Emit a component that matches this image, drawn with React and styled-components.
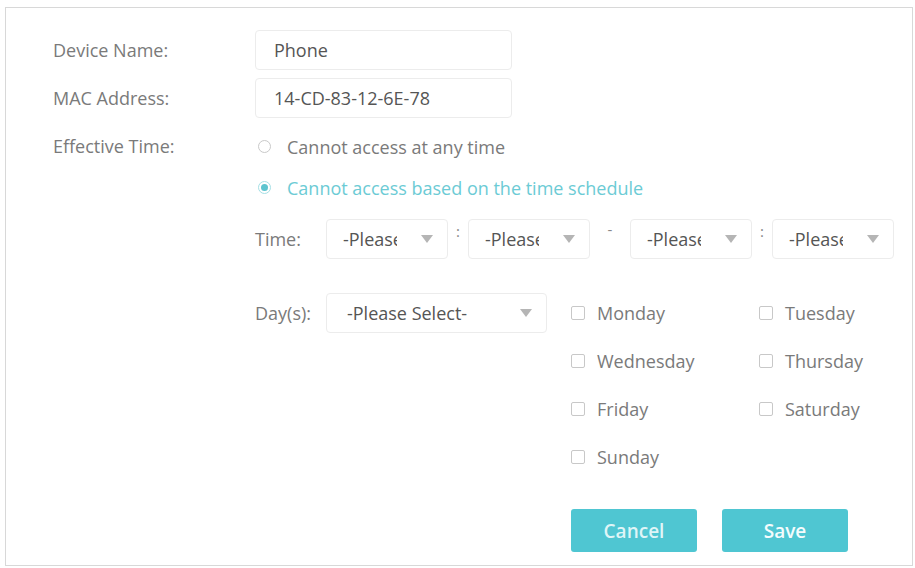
import React from "react";
import styled, { createGlobalStyle } from "styled-components";

const Global = createGlobalStyle`
  html, body { margin: 0; padding: 0; background: #fff; }
  body { font-family: "Open Sans", "Noto Sans", sans-serif; }
  * { box-sizing: border-box; }
`;

const Page = styled.div`
  padding: 7px 2px 2px 5px;
  width: 915px;
  height: 568px;
`;

const Panel = styled.div`
  width: 908px;
  height: 559px;
  border: 1px solid #d8d8d8;
  padding: 22px 0 0 47px;
  display: flex;
  flex-direction: column;
  color: #7a7a7a;
  font-size: 18px;
`;

const Row = styled.div`
  display: flex;
  align-items: ${(p) => (p.$top ? "flex-start" : "center")};
  margin-top: ${(p) => p.$mt || 0}px;
`;

const Label = styled.div`
  width: 202px;
  flex: none;
  line-height: ${(p) => p.$lh || 40}px;
`;

const TextInput = styled.div`
  width: 257px;
  height: 40px;
  border: 1px solid #ececec;
  border-radius: 4px;
  padding-left: 18px;
  display: flex;
  align-items: center;
  color: #555;
`;

const Col = styled.div`
  display: flex;
  flex-direction: column;
`;

const RadioRow = styled.label`
  display: flex;
  align-items: center;
  height: 41px;
  gap: 16px;
  padding-left: 3px;
  color: ${(p) => (p.$on ? "#6ccbd5" : "#7a7a7a")};
`;

const RadioDot = styled.span`
  width: 13px;
  height: 13px;
  border-radius: 50%;
  border: 1px solid ${(p) => (p.$on ? "#a5dfe5" : "#c9c9c9")};
  display: flex;
  align-items: center;
  justify-content: center;
  &::after {
    content: "";
    width: 7px;
    height: 7px;
    border-radius: 50%;
    background: ${(p) => (p.$on ? "#5cc4cf" : "transparent")};
  }
`;

const SubLabel = styled.div`
  width: 71px;
  flex: none;
  height: 40px;
  display: flex;
  align-items: center;
`;

const Select = styled.div`
  width: ${(p) => p.$w}px;
  height: 40px;
  border: 1px solid #ececec;
  border-radius: 4px;
  display: flex;
  align-items: center;
  padding: 0 14px 0 ${(p) => p.$pl || 16}px;
  color: #555;
  white-space: nowrap;
  flex: none;
`;

const SelText = styled.span`
  width: ${(p) => (p.$tw ? `${p.$tw}px` : "auto")};
  overflow: hidden;
  text-overflow: clip;
  white-space: nowrap;
  flex: none;
`;

const Arrow = styled.span`
  width: 0;
  height: 0;
  border-left: 6px solid transparent;
  border-right: 6px solid transparent;
  border-top: 8px solid #b5b5b5;
  margin-left: auto;
  flex: none;
`;

const Sep = styled.div`
  width: ${(p) => p.$w}px;
  height: 14px;
  align-self: flex-start;
  text-align: center;
  font-size: 15px;
  line-height: 14px;
  color: #888;
  margin-top: ${(p) => p.$mt || 0}px;
`;

const Days = styled.div`
  display: grid;
  grid-template-columns: 188px 150px;
  row-gap: 8px;
  margin-left: 24px;
`;

const Day = styled.label`
  height: 40px;
  display: flex;
  align-items: center;
  gap: 12px;
  color: #7a7a7a;
`;

const Box = styled.span`
  width: 14px;
  height: 14px;
  border: 1px solid #c8c8c8;
  border-radius: 2px;
  flex: none;
`;

const Buttons = styled.div`
  display: flex;
  gap: 25px;
  margin: 32px 0 0 518px;
`;

const Button = styled.button`
  width: 126px;
  height: 43px;
  border: none;
  border-radius: 3px;
  background: #4fc6d2;
  color: ${(p) => (p.$dim ? "#dff5f7" : "#f4fcfd")};
  font-family: "Open Sans", "Liberation Sans", sans-serif;
  font-size: 19px;
  font-weight: 600;
  cursor: pointer;
`;

const TimeSelect = () => (
  <Select $w={122}>
    <SelText $tw={54}>-Please Select-</SelText>
    <Arrow />
  </Select>
);

export default function App() {
  return (
    <>
      <Global />
      <Page>
        <Panel>
          <Row>
            <Label>Device Name:</Label>
            <TextInput>Phone</TextInput>
          </Row>
          <Row $mt={8}>
            <Label>MAC Address:</Label>
            <TextInput>14-CD-83-12-6E-78</TextInput>
          </Row>
          <Row $mt={8} $top>
            <Label $lh={41}>Effective Time:</Label>
            <Col>
              <RadioRow>
                <RadioDot />
                Cannot access at any time
              </RadioRow>
              <RadioRow $on>
                <RadioDot $on />
                Cannot access based on the time schedule
              </RadioRow>
              <Row $mt={11}>
                <SubLabel>Time:</SubLabel>
                <TimeSelect />
                <Sep $w={20} $mt={5}>:</Sep>
                <TimeSelect />
                <Sep $w={40} $mt={3}>-</Sep>
                <TimeSelect />
                <Sep $w={20} $mt={5}>:</Sep>
                <TimeSelect />
              </Row>
              <Row $mt={34} $top>
                <SubLabel>Day(s):</SubLabel>
                <Select $w={221} $pl={20}>
                  <SelText>-Please Select-</SelText>
                  <Arrow />
                </Select>
                <Days>
                  {["Monday", "Tuesday", "Wednesday", "Thursday", "Friday", "Saturday", "Sunday"].map((d) => (
                    <Day key={d}>
                      <Box />
                      {d}
                    </Day>
                  ))}
                </Days>
              </Row>
            </Col>
          </Row>
          <Buttons>
            <Button $dim>Cancel</Button>
            <Button>Save</Button>
          </Buttons>
        </Panel>
      </Page>
    </>
  );
}
